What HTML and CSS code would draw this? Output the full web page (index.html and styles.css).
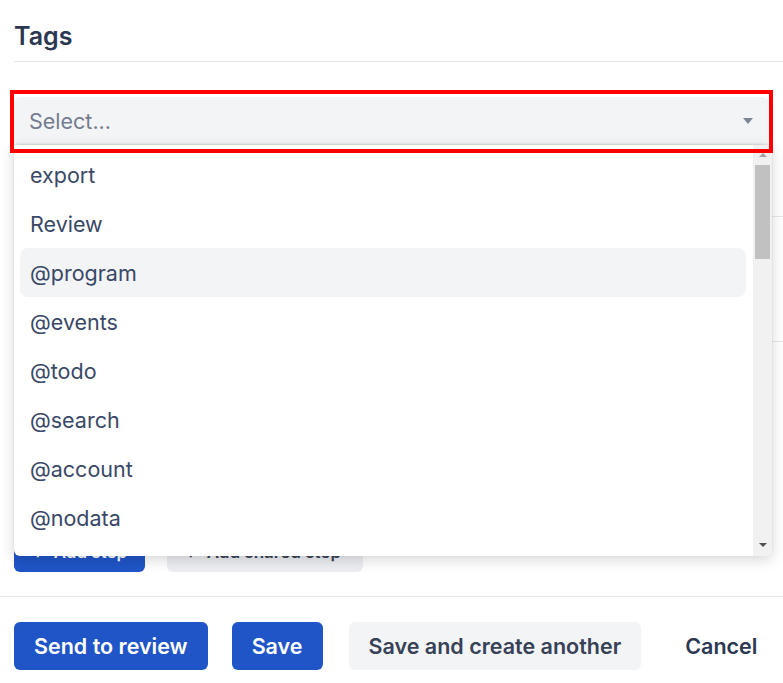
FILE: index.html
```html
<!DOCTYPE html>
<html lang="en">
<head>
<meta charset="utf-8">
<title>Tags</title>
<link rel="stylesheet" href="styles.css">
</head>
<body>
<div class="page">
  <div class="header">
    <h2 class="title">Tags</h2>
  </div>

  <div class="field">
    <div class="select-wrap">
      <div class="select">
        <span class="placeholder">Select...</span>
        <span class="caret"></span>
      </div>
      <div class="highlight"></div>
      <div class="menu">
        <ul class="options">
          <li class="option">export</li>
          <li class="option">Review</li>
          <li class="option active">@program</li>
          <li class="option">@events</li>
          <li class="option">@todo</li>
          <li class="option">@search</li>
          <li class="option">@account</li>
          <li class="option">@nodata</li>
        </ul>
        <div class="scrollbar">
          <span class="arrow up"></span>
          <div class="track"><div class="thumb"></div></div>
          <span class="arrow down"></span>
        </div>
      </div>
    </div>
  </div>

  <div class="row row-a"></div>
  <div class="row row-b"></div>

  <div class="steps">
    <button class="btn btn-primary btn-sm"><span class="plus">+</span> Add step</button>
    <button class="btn btn-light btn-sm"><span class="plus">+</span> Add shared step</button>
  </div>

  <div class="footer">
    <button class="btn btn-primary">Send to review</button>
    <button class="btn btn-primary">Save</button>
    <button class="btn btn-light">Save and create another</button>
    <button class="btn btn-link">Cancel</button>
  </div>
</div>
</body>
</html>
```

FILE: styles.css
```css
* { box-sizing: border-box; }

html, body {
  margin: 0;
  padding: 0;
  background: #ffffff;
  overflow: hidden;
}

body {
  font-family: Inter, "Noto Sans", "Liberation Sans", sans-serif;
  color: #394867;
  width: 783px;
  height: 683px;
}

.page {
  padding-left: 14px;
}

.header {
  height: 62px;
  border-bottom: 1px solid #e5e7eb;
  display: flex;
  align-items: flex-start;
}

.title {
  margin: 22px 0 0 0;
  font-size: 25px;
  line-height: 28px;
  font-weight: 600;
  color: #2c3852;
}

.field {
  padding-top: 35px;
  padding-right: 14px;
}

.select-wrap {
  position: relative;
}

.select {
  height: 48px;
  background: #f3f4f6;
  border-radius: 6px;
  display: flex;
  align-items: center;
  justify-content: space-between;
  padding: 0 16px 0 15px;
}

.placeholder {
  font-size: 21.5px;
  color: #737c8e;
}

.caret {
  width: 0;
  height: 0;
  border-left: 5px solid transparent;
  border-right: 5px solid transparent;
  border-top: 6px solid #7d8597;
}

.highlight {
  position: absolute;
  left: -4px;
  right: -4px;
  top: -7px;
  height: 63px;
  border: 4px solid #ff0000;
  z-index: 3;
  pointer-events: none;
}

.menu {
  position: absolute;
  left: 0;
  top: 48px;
  width: 758px;
  height: 411px;
  background: #ffffff;
  border-radius: 0 0 6px 6px;
  box-shadow: 0 -1px 2px rgba(0, 0, 0, 0.12), 0 4px 14px rgba(0, 0, 0, 0.16);
  display: flex;
  overflow: hidden;
  z-index: 2;
}

.options {
  list-style: none;
  margin: 0;
  padding: 5px 7px 0 6px;
  flex: 1;
}

.option {
  height: 49px;
  display: flex;
  align-items: center;
  padding: 0 10px;
  font-size: 21.5px;
  color: #394867;
  border-radius: 8px;
  white-space: nowrap;
}

.option.active {
  background: #f3f4f6;
}

.scrollbar {
  width: 19px;
  background: #f1f1f1;
  display: flex;
  flex-direction: column;
  align-items: center;
  padding: 0 2px;
}

.arrow {
  width: 0;
  height: 0;
  border-left: 4px solid transparent;
  border-right: 4px solid transparent;
  display: block;
}

.arrow.up {
  border-bottom: 4px solid #a3a3a3;
  margin-top: 8px;
}

.arrow.down {
  border-top: 4px solid #505050;
  margin-bottom: 9px;
}

.track {
  flex: 1;
  width: 100%;
  padding-top: 8px;
}

.thumb {
  width: 100%;
  height: 94px;
  background: #c1c1c1;
}

.row {
  border-bottom: 1px solid #e5e7eb;
}

.row-a { height: 72px; }
.row-b { height: 125px; }

.steps {
  display: flex;
  gap: 22px;
  padding-top: 190px;
  padding-bottom: 24px;
}

.btn {
  font-family: Inter, "Noto Sans", "Liberation Sans", sans-serif;
  border: none;
  border-radius: 6px;
  font-size: 21.5px;
  font-weight: 600;
  height: 48px;
  padding: 0 20px;
  white-space: nowrap;
  cursor: pointer;
}

.btn-sm {
  height: 40px;
  font-size: 17px;
  padding: 0 18px;
  text-align: left;
}

.btn-primary {
  background: #2055c8;
  color: #ffffff;
}

.btn-light {
  background: #f3f4f6;
  color: #374256;
}

.btn-sm.btn-light {
  background: #eceef2;
  width: 196px;
}

.btn-sm.btn-primary {
  width: 131px;
}

.plus {
  margin-right: 6px;
}

.btn-link {
  background: transparent;
  color: #2c3852;
}

.footer {
  margin-left: -14px;
  padding: 25px 0 0 14px;
  border-top: 1px solid #e5e7eb;
  display: flex;
  gap: 24px;
}

.footer .btn-light {
  margin-left: 2px;
}
```
